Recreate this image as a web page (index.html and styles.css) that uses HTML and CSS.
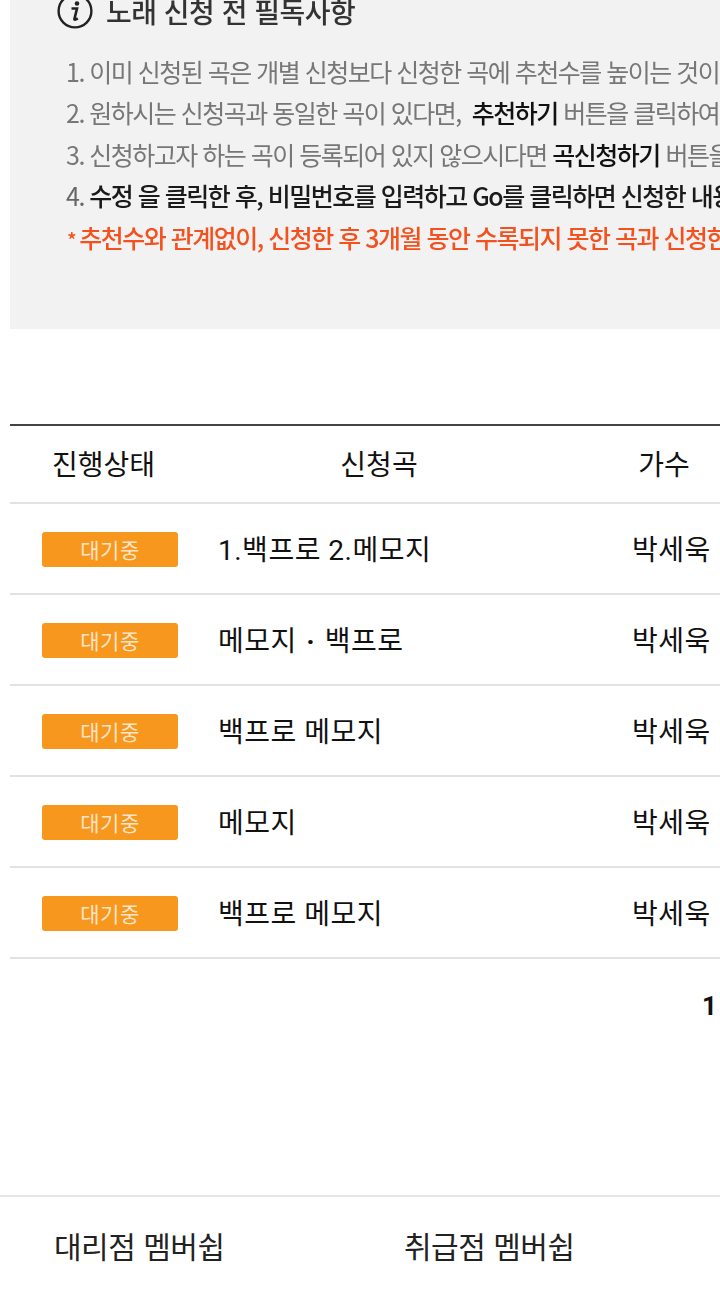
FILE: index.html
```html
<!DOCTYPE html>
<html lang="ko">
<head>
<meta charset="utf-8">
<title>노래 신청</title>
<link rel="stylesheet" href="styles.css">
</head>
<body>
<div class="page">
  <section class="notice">
    <h2 class="notice-title">
      <svg class="info-icon" viewBox="0 0 36 36" aria-hidden="true">
        <circle cx="18" cy="18" r="16.4" fill="none" stroke="#222" stroke-width="2.4"/>
        <circle cx="20" cy="10.5" r="2.3" fill="#222"/>
        <path d="M14.5 15.5h5.5l-2.6 10.5c-.2.9.6 1.2 3.4-.6" fill="none" stroke="#222" stroke-width="2.6"/>
      </svg>
      <span>노래 신청 전 필독사항</span>
    </h2>
    <ol class="rules">
      <li>1. 이미 신청된 곡은 개별 신청보다 신청한 곡에 추천수를 높이는 것이 유리합니다.</li>
      <li>2. 원하시는 신청곡과 동일한 곡이 있다면,&nbsp; <b class="em">추천하기</b> 버튼을 클릭하여 추천해 주세요.</li>
      <li>3. 신청하고자 하는 곡이 등록되어 있지 않으시다면 <b class="em">곡신청하기</b> 버튼을 클릭해 주세요.</li>
      <li class="dark">4. <span class="em2">수정 을 클릭한 후, 비밀번호를 입력하고 Go를 클릭하면 신청한 내용을 수정할 수 있습니다.</span></li>
      <li class="warn"><span class="star">*</span>추천수와 관계없이, 신청한 후 3개월 동안 수록되지 못한 곡과 신청한 내용은 삭제됩니다.</li>
    </ol>
  </section>

  <section class="board">
    <div class="row head">
      <div class="c-status">진행상태</div>
      <div class="c-song">신청곡</div>
      <div class="c-artist">가수</div>
    </div>
    <div class="row">
      <div class="c-status"><span class="badge">대기중</span></div>
      <div class="c-song">1.백프로 2.메모지</div>
      <div class="c-artist">박세욱</div>
    </div>
    <div class="row">
      <div class="c-status"><span class="badge">대기중</span></div>
      <div class="c-song">메모지<span class="dot">·</span>백프로</div>
      <div class="c-artist">박세욱</div>
    </div>
    <div class="row">
      <div class="c-status"><span class="badge">대기중</span></div>
      <div class="c-song">백프로 메모지</div>
      <div class="c-artist">박세욱</div>
    </div>
    <div class="row">
      <div class="c-status"><span class="badge">대기중</span></div>
      <div class="c-song">메모지</div>
      <div class="c-artist">박세욱</div>
    </div>
    <div class="row">
      <div class="c-status"><span class="badge">대기중</span></div>
      <div class="c-song">백프로 메모지</div>
      <div class="c-artist">박세욱</div>
    </div>
  </section>

  <div class="pager"><span>1</span></div>

  <footer class="footer">
    <a class="foot-link">대리점 멤버쉽</a>
    <a class="foot-link">취급점 멤버쉽</a>
  </footer>
</div>
</body>
</html>
```

FILE: styles.css
```css
html, body {
  margin: 0;
  padding: 0;
  background: #fff;
}

.page {
  width: 720px;
  height: 1302px;
  overflow: hidden;
  font-family: "Noto Sans CJK KR", "Noto Sans", sans-serif;
  color: #111;
}

.notice {
  margin-left: 10px;
  height: 329px;
  background: #f2f2f2;
  overflow: hidden;
  white-space: nowrap;
}

.notice-title {
  display: flex;
  align-items: center;
  gap: 13px;
  margin: -9px 0 0 47px;
  height: 40px;
  font-size: 28px;
  font-weight: 500;
  letter-spacing: -0.5px;
  color: #333;
  filter: blur(0.5px);
}

.info-icon {
  width: 36px;
  height: 36px;
  flex: none;
}

.rules {
  list-style: none;
  margin: 20px 0 0 56px;
  padding: 0;
  font-size: 25px;
  line-height: 41.4px;
  letter-spacing: -1.5px;
  color: #777;
  filter: blur(0.5px);
}

.em {
  font-weight: 500;
  color: #111;
}

.dark {
  color: #666;
}

.em2 {
  font-weight: 500;
  color: #1a1a1a;
}

.warn {
  font-weight: 500;
  color: #f4511e;
}

.star {
  margin: 0 4px 0 1px;
  font-size: 20px;
}

.board {
  margin: 95px 0 0 10px;
  border-top: 2px solid #444;
  font-family: Roboto, "Noto Sans CJK KR", sans-serif;
}

.row {
  display: grid;
  grid-template-columns: 200px 422px 1fr;
  align-items: center;
  height: 89px;
  border-bottom: 2px solid #e2e2e2;
  font-size: 28px;
  letter-spacing: 0.5px;
  color: #111;
  white-space: nowrap;
}

.row.head {
  height: 76px;
  text-align: center;
  letter-spacing: 0;
}

.head .c-song {
  width: 322px;
}

.head .c-artist {
  width: 64px;
}

.c-song,
.c-artist {
  padding-bottom: 2px;
}

.c-song {
  padding-left: 8px;
}

.dot {
  margin: 0 9.5px;
  font-weight: 700;
}

.c-status {
  padding: 2px 0 0 32px;
  box-sizing: border-box;
}

.head .c-status {
  padding: 0 0 2px 0;
  width: 187px;
}

.badge {
  display: flex;
  align-items: center;
  justify-content: center;
  width: 136px;
  height: 35px;
  padding-bottom: 2px;
  box-sizing: border-box;
  border-radius: 3px;
  background: #f7971e;
  color: #ffe6c8;
  font-size: 21px;
  letter-spacing: 0.5px;
}

.pager {
  display: flex;
  justify-content: flex-end;
  height: 236px;
  padding: 32px 3px 0 0;
  box-sizing: border-box;
  font-family: Roboto, sans-serif;
  font-size: 26px;
  font-weight: 700;
  color: #111;
}

.footer {
  display: flex;
  border-top: 2px solid #e6e6e6;
  padding: 26px 0 0 54px;
  gap: 58px;
  font-size: 30px;
  color: #222;
  letter-spacing: -0.5px;
  white-space: nowrap;
}

.foot-link {
  width: 292px;
}
```
